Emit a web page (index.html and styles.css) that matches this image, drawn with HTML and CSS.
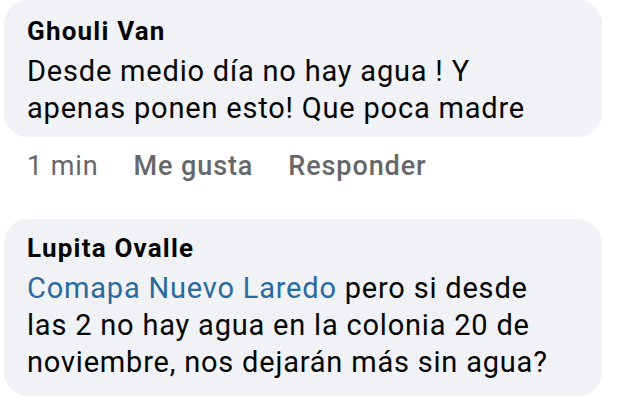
FILE: index.html
```html
<!DOCTYPE html>
<html lang="es">
<head>
<meta charset="utf-8">
<link rel="stylesheet" href="styles.css">
</head>
<body>
<div class="thread">
  <div class="comment">
    <div class="bubble">
      <div class="name">Ghouli Van</div>
      <div class="text">Desde medio día no hay agua ! Y<br>apenas ponen esto! Que poca madre</div>
    </div>
    <div class="actions">
      <span class="time">1 min</span>
      <span class="act">Me gusta</span>
      <span class="act">Responder</span>
    </div>
  </div>
  <div class="comment">
    <div class="bubble bubble2">
      <div class="name">Lupita Ovalle</div>
      <div class="text"><span class="mention">Comapa Nuevo Laredo</span> pero si desde<br>las 2 no hay agua en la colonia 20 de<br>noviembre, nos dejarán más sin agua?</div>
    </div>
  </div>
</div>
</body>
</html>
```

FILE: styles.css
```css
html, body {
  margin: 0;
  padding: 0;
  background: #ffffff;
}
body {
  width: 622px;
  height: 401px;
  overflow: hidden;
  font-family: Roboto, "Noto Sans", sans-serif;
  color: #050505;
}
.thread {
  display: flex;
  flex-direction: column;
  padding: 0 20px 0 4px;
}
.bubble {
  background: #f0f2f5;
  border-radius: 24px;
  padding: 14px 20px 10px 23px;
  width: 598px;
  box-sizing: border-box;
}
.bubble2 {
  margin-top: 36px;
  padding-top: 12px;
  padding-bottom: 15px;
}
.name {
  font-weight: 700;
  font-size: 26px;
  letter-spacing: 1.2px;
  line-height: 34px;
}
.text {
  margin-top: 5px;
  font-size: 29px;
  letter-spacing: 0.8px;
  line-height: 37px;
}
.mention {
  color: #2b6a9e;
}
.actions {
  display: flex;
  gap: 35px;
  padding: 12px 0 0 23px;
  font-size: 27px;
  letter-spacing: 0.9px;
  line-height: 34px;
  color: #65676b;
}
.act {
  font-weight: 500;
}
```
